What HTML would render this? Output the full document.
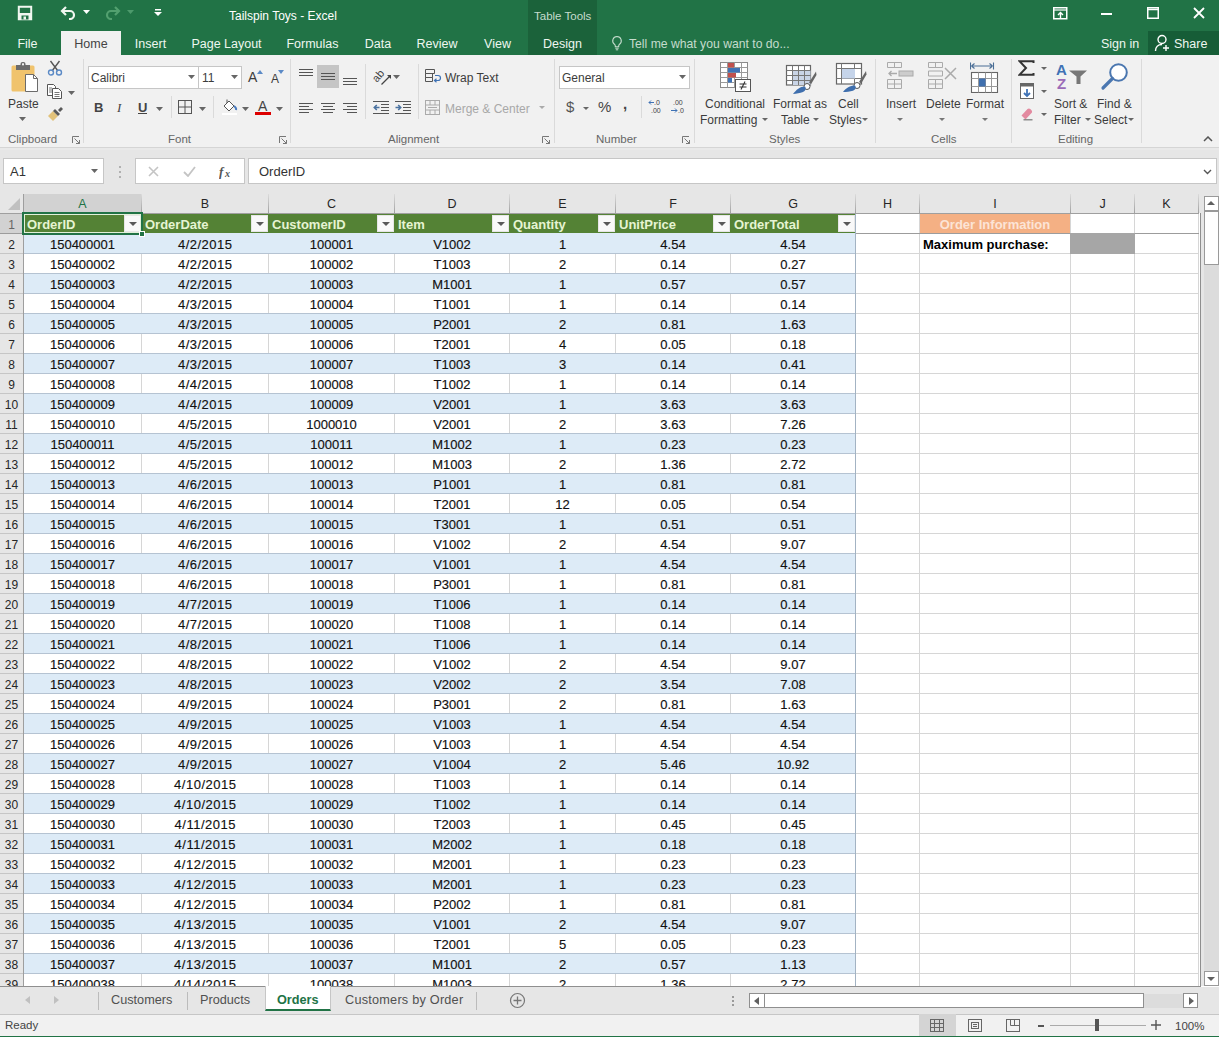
<!DOCTYPE html><html><head><meta charset="utf-8"><style>
*{box-sizing:border-box}
html,body{margin:0;padding:0}
body{width:1219px;height:1037px;overflow:hidden;position:relative;background:#fff;font-family:"Liberation Sans",sans-serif;color:#262626}
.a{position:absolute}
#title{position:absolute;left:0;top:0;width:1219px;height:55px;background:#217346}
.tt{position:absolute;color:#fff;font-size:12.5px;white-space:nowrap}
.tab{position:absolute;top:32px;height:23px;color:#eef7f0;font-size:12.5px;line-height:24px;text-align:center;white-space:nowrap}
#home{left:61px;width:60px;background:#f1f1f1;color:#444;top:31px;height:24px;line-height:26px}
#ctx{position:absolute;left:528px;top:0;width:69px;height:55px;background:#1b623a}
#ribbon{position:absolute;left:0;top:55px;width:1219px;height:92px;background:#f1f1f1}
.sep{position:absolute;top:4px;width:1px;height:84px;background:#dadada}
.gl{position:absolute;top:78px;font-size:11.5px;color:#666;white-space:nowrap}
.rt{position:absolute;font-size:12px;color:#3c3c3c;white-space:nowrap;line-height:16px;text-align:center}
.dis{color:#a8a8a8}
#fbar{position:absolute;left:0;top:147px;width:1219px;height:48px;background:#e6e6e6;border-top:3px solid #e9e9e9}
.box{position:absolute;background:#fff;border:1px solid #c6c6c6}
#grid{position:absolute;left:0;top:0;width:1219px;height:1037px}
.corner{position:absolute;left:0;top:194px;width:23px;height:20px;background:#e6e6e6}
.ch{position:absolute;top:194px;height:20px;background:#e6e6e6;font-size:12.5px;line-height:21px;text-align:center;color:#262626}
.chl{position:absolute;top:194px;width:1px;height:19px;background:linear-gradient(#dcdcdc,#a0a0a0)}
.ch.sel{background:#d2d2d2;color:#217346}
.rh{position:absolute;left:0;width:23px;height:20px;background:#e6e6e6;font-size:12px;line-height:22px;text-align:center;color:#262626}
.rh.sel{background:#d2d2d2;color:#666}
.rhb{position:absolute;left:23px;top:194px;width:1px;height:792px;background:#9e9e9e}
.rhl{position:absolute;left:0;width:23px;height:1px;background:#c6c6c6}
.trow{position:absolute;left:24px;width:831px;height:19px}
.b1{background:#ddebf7}
.hl{position:absolute;left:24px;width:1175px;height:1px;background:#d6d6d6}
.thl{position:absolute;left:24px;width:831px;height:1px;background:#b5c3d2}
.vl{position:absolute;top:214px;width:1px;height:772px;background:#d6d6d6}
.thead{position:absolute;left:24px;width:831px;height:19px;background:#548235}
.th{position:absolute;height:20px;line-height:21px;padding-left:3px;font-weight:bold;font-size:13px;color:#e6f4d2;white-space:nowrap}
.fb{position:absolute;width:17px;height:17px;background:#f9f9f9;border:1px solid #e6e6e6}
.fb i{position:absolute;left:4px;top:6px;width:0;height:0;border-left:4px solid transparent;border-right:4px solid transparent;border-top:4px solid #595959}
.c{position:absolute;height:20px;line-height:22px;text-align:center;font-size:13px;color:#111;white-space:nowrap;-webkit-text-stroke:0.15px #111}
.tbr{position:absolute;left:855px;top:214px;width:1px;height:772px;background:#a3b3c3}
.oi{position:absolute;height:19px;background:#f4b084;color:#fce4d6;font-weight:bold;font-size:13px;line-height:21px;text-align:center}
.mp{position:absolute;height:20px;line-height:22px;padding-left:3px;font-weight:bold;font-size:13px;color:#000;white-space:nowrap}
.j2{position:absolute;height:21px;background:#a6a6a6}
.selbox{position:absolute;left:22px;top:212px;width:121px;height:23px;border:2px solid #217346;box-shadow:inset 0 0 0 1px #e2f0d9}
.selhandle{position:absolute;left:139px;top:231px;width:6px;height:6px;background:#217346;border:1px solid #fff}
#tabs{position:absolute;left:0;top:987px;width:1219px;height:27px;background:#e6e6e6}
#status{position:absolute;left:0;top:1014px;width:1219px;height:22px;background:#f1f1f1;border-top:1px solid #c6c6c6}
#ribbon .rt{margin-top:1px}
.chb{position:absolute;left:0;top:213px;width:1199px;height:1px;background:#9f9f9f}

</style></head><body>
<div id="title">
  <!-- save -->
  <svg class="a" style="left:17px;top:5px" width="16" height="16" viewBox="0 0 16 16"><path d="M1.8 1.8h12.4v12.4H1.8z" fill="none" stroke="#f0f7f0" stroke-width="2"/><path d="M1.5 8h13v6.5h-13z" fill="#f0f7f0"/><rect x="4.5" y="10.5" width="7" height="4" fill="#217346"/><rect x="6.5" y="11.5" width="2.5" height="3" fill="#f0f7f0"/></svg>
  <!-- undo -->
  <svg class="a" style="left:60px;top:5px" width="17" height="15" viewBox="0 0 17 15"><path d="M2.5 6h7.5a4 4 0 0 1 0 8h-1" fill="none" stroke="#f0f7f0" stroke-width="2.2"/><path d="M6 2L2 6l4 4" fill="none" stroke="#f0f7f0" stroke-width="2.2"/></svg>
  <svg class="a" style="left:83px;top:10px" width="7" height="4"><path d="M0 0h7L3.5 4z" fill="#fff"/></svg>
  <!-- redo -->
  <svg class="a" style="left:104px;top:5px" width="17" height="15" viewBox="0 0 17 15"><path d="M14.5 6H7a4 4 0 0 0 0 8h1" fill="none" stroke="#52a06f" stroke-width="2.2"/><path d="M11 2l4 4-4 4" fill="none" stroke="#52a06f" stroke-width="2.2"/></svg>
  <svg class="a" style="left:127px;top:10px" width="7" height="4"><path d="M0 0h7L3.5 4z" fill="#4d9a6c"/></svg>
  <!-- customize -->
  <svg class="a" style="left:154px;top:9px" width="8" height="8"><rect x="1" y="0" width="6" height="1.5" fill="#fff"/><path d="M0 3h8L4 7z" fill="#fff"/></svg>
  <div class="tt" style="left:229px;top:9px;font-size:12px">Tailspin Toys - Excel</div>
  <div id="ctx"></div>
  <div class="tt" style="left:534px;top:10px;font-size:11.5px;color:#c5dccd">Table Tools</div>
  <!-- window buttons -->
  <svg class="a" style="left:1053px;top:7px" width="15" height="13"><rect x="0.75" y="0.75" width="13" height="11" fill="none" stroke="#fff" stroke-width="1.5"/><path d="M1 3h13" stroke="#fff" stroke-width="1.2"/><path d="M7.5 11V5.5M5 8l2.5-2.5L10 8" fill="none" stroke="#fff" stroke-width="1.4"/></svg>
  <div class="a" style="left:1101px;top:13px;width:11px;height:2px;background:#fff"></div>
  <svg class="a" style="left:1147px;top:7px" width="12" height="12"><rect x="0.75" y="0.75" width="10.5" height="10.5" fill="none" stroke="#fff" stroke-width="1.5"/><path d="M1 2.5h10" stroke="#fff" stroke-width="1.5"/></svg>
  <svg class="a" style="left:1193px;top:7px" width="12" height="12"><path d="M1 1l10 10M11 1L1 11" stroke="#fff" stroke-width="1.8"/></svg>
  <!-- tabs -->
  <div class="tab" style="left:10px;width:35px">File</div>
  <div class="tab" id="home">Home</div>
  <div class="tab" style="left:130px;width:41px">Insert</div>
  <div class="tab" style="left:188px;width:77px">Page Layout</div>
  <div class="tab" style="left:282px;width:61px">Formulas</div>
  <div class="tab" style="left:360px;width:36px">Data</div>
  <div class="tab" style="left:412px;width:50px">Review</div>
  <div class="tab" style="left:479px;width:37px">View</div>
  <div class="tab" style="left:528px;width:69px">Design</div>
  <svg class="a" style="left:611px;top:35px" width="12" height="16"><path d="M6 1.5a4.3 4.3 0 0 0-2.6 7.7c.6.5.9 1.1.9 1.8v.8h3.4V11c0-.7.3-1.3.9-1.8A4.3 4.3 0 0 0 6 1.5z" fill="none" stroke="#c5dccd" stroke-width="1.1"/><path d="M4.3 13.2h3.4M4.8 14.8h2.4" stroke="#c5dccd" stroke-width="1"/></svg>
  <div class="tab" style="left:629px;width:auto;color:#c5dccd;font-size:12.2px">Tell me what you want to do...</div>
  <div class="tab" style="left:1101px;width:auto">Sign in</div>
  <div class="a" style="left:1148px;top:31px;width:71px;height:24px;background:#165d37"></div>
  <svg class="a" style="left:1154px;top:34px" width="17" height="18" viewBox="0 0 17 18"><circle cx="8" cy="5.5" r="4" fill="none" stroke="#fff" stroke-width="1.4"/><path d="M1.5 17c0-4 2.5-6.5 6.5-6.5" fill="none" stroke="#fff" stroke-width="1.4"/><path d="M12 11v6M9 14h6" stroke="#fff" stroke-width="1.4"/></svg>
  <div class="tab" style="left:1174px;width:auto">Share</div>
</div>

<div id="ribbon">
  <!-- Clipboard -->
  <svg class="a" style="left:10px;top:6px" width="30" height="32" viewBox="0 0 30 32">
    <rect x="1.5" y="4.5" width="23" height="26" rx="1.5" fill="#f0c36d"/>
    <path d="M6 4h14v5H6z" fill="#6b6b6b"/><rect x="10.5" y="1" width="5" height="5" rx="2" fill="#6b6b6b"/><rect x="12" y="2.3" width="2" height="2" fill="#f1f1f1"/>
    <path d="M15.5 13.5h8l4 4v13h-12z" fill="#fff" stroke="#6b6b6b" stroke-width="1"/><path d="M23.5 13.5v4h4" fill="none" stroke="#6b6b6b" stroke-width="1"/>
  </svg>
  <div class="rt" style="left:8px;top:40px;width:30px">Paste</div>
  <svg class="a" style="left:19px;top:62px" width="7" height="4"><path d="M0 0h7L3.5 4z" fill="#666"/></svg>
  <svg class="a" style="left:47px;top:5px" width="16" height="16" viewBox="0 0 16 16"><path d="M3.5 1l7.5 10M12.5 1L5 11" stroke="#555" stroke-width="1.4"/><circle cx="4" cy="12.5" r="2.5" fill="none" stroke="#5b8ac6" stroke-width="1.4"/><circle cx="12" cy="12.5" r="2.5" fill="none" stroke="#5b8ac6" stroke-width="1.4"/></svg>
  <svg class="a" style="left:46px;top:28px" width="17" height="16" viewBox="0 0 17 16"><path d="M1.5 1.5h6l2 2v9h-8z" fill="#fff" stroke="#555" stroke-width="1"/><path d="M6.5 5.5h6l3 3v7h-9z" fill="#fff" stroke="#555" stroke-width="1"/><path d="M8.5 9.5h5M8.5 11.5h5M8.5 13.5h5M3 5h3M3 7h3M3 9h3" stroke="#555" stroke-width="0.8"/></svg>
  <svg class="a" style="left:68px;top:36px" width="7" height="4"><path d="M0 0h7L3.5 4z" fill="#666"/></svg>
  <svg class="a" style="left:47px;top:52px" width="17" height="15" viewBox="0 0 17 15"><path d="M1 9l5-5 5 5-5 5z" fill="#e2c27a"/><path d="M6 4l5 5 2-2-5-5z" fill="#595959"/><path d="M11 3l3-3 2 2-3 3z" fill="#595959"/></svg>
  <div class="gl" style="left:8px">Clipboard</div>
  <svg class="a" style="left:72px;top:81px" width="8" height="8"><path d="M0.5 7V0.5H7" fill="none" stroke="#777" stroke-width="1"/><path d="M2.5 2.5l5 5M7.5 4v3.5H4" fill="none" stroke="#777" stroke-width="1"/></svg>
  <div class="sep" style="left:83px"></div>

  <!-- Font -->
  <div class="box" style="left:88px;top:11px;width:111px;height:23px"></div>
  <div class="rt" style="left:91px;top:14px;text-align:left">Calibri</div>
  <svg class="a" style="left:188px;top:20px" width="7" height="4"><path d="M0 0h7L3.5 4z" fill="#666"/></svg>
  <div class="box" style="left:198px;top:11px;width:44px;height:23px"></div>
  <div class="rt" style="left:202px;top:14px;text-align:left">11</div>
  <svg class="a" style="left:231px;top:20px" width="7" height="4"><path d="M0 0h7L3.5 4z" fill="#666"/></svg>
  <div class="rt" style="left:248px;top:13px;font-size:14px;text-align:left">A</div>
  <svg class="a" style="left:257px;top:15px" width="6" height="4"><path d="M0 4h6L3 0z" fill="#5b8ac6"/></svg>
  <div class="rt" style="left:271px;top:15px;font-size:12px;text-align:left">A</div>
  <svg class="a" style="left:278px;top:15px" width="6" height="4"><path d="M0 0h6L3 4z" fill="#5b8ac6"/></svg>
  <div class="rt" style="left:94px;top:44px;font-weight:bold;font-size:13px;text-align:left;color:#444">B</div>
  <div class="rt" style="left:117px;top:44px;font-style:italic;font-size:13px;text-align:left;color:#444;font-family:'Liberation Serif',serif">I</div>
  <div class="rt" style="left:138px;top:44px;font-weight:bold;font-size:13px;text-align:left;color:#444">U</div>
  <div class="a" style="left:138px;top:58px;width:9px;height:1px;background:#444"></div>
  <svg class="a" style="left:156px;top:52px" width="7" height="4"><path d="M0 0h7L3.5 4z" fill="#666"/></svg>
  <div class="a" style="left:171px;top:41px;width:1px;height:22px;background:#dadada"></div>
  <svg class="a" style="left:178px;top:45px" width="15" height="14"><rect x="0.5" y="0.5" width="13" height="13" fill="none" stroke="#555"/><path d="M7 0.5v13M0.5 7h13" stroke="#555"/></svg>
  <svg class="a" style="left:199px;top:52px" width="7" height="4"><path d="M0 0h7L3.5 4z" fill="#666"/></svg>
  <div class="a" style="left:213px;top:41px;width:1px;height:22px;background:#dadada"></div>
  <svg class="a" style="left:222px;top:43px" width="16" height="17" viewBox="0 0 16 17"><path d="M2 8l5-5 5 5-5 5z" fill="#fff" stroke="#555" stroke-width="1"/><path d="M5 5V1.5" stroke="#555"/><path d="M12 8c1.5 1 2.5 2.5 2 4" fill="none" stroke="#4a7cc0" stroke-width="2"/><rect x="0" y="15" width="15" height="2" fill="#fff"/></svg>
  <svg class="a" style="left:242px;top:52px" width="7" height="4"><path d="M0 0h7L3.5 4z" fill="#666"/></svg>
  <div class="rt" style="left:258px;top:42px;font-size:14px;text-align:left;color:#444">A</div>
  <div class="a" style="left:255px;top:57px;width:16px;height:3px;background:#d00"></div>
  <svg class="a" style="left:276px;top:52px" width="7" height="4"><path d="M0 0h7L3.5 4z" fill="#666"/></svg>
  <div class="gl" style="left:168px">Font</div>
  <svg class="a" style="left:279px;top:81px" width="8" height="8"><path d="M0.5 7V0.5H7" fill="none" stroke="#777" stroke-width="1"/><path d="M2.5 2.5l5 5M7.5 4v3.5H4" fill="none" stroke="#777" stroke-width="1"/></svg>
  <div class="sep" style="left:290px"></div>

  <!-- Alignment -->
  <svg class="a" style="left:299px;top:13px" width="15" height="8"><path d="M0 1.5h14M0 4.5h14M0 7.5h14" stroke="#555" stroke-width="1"/></svg>
  <div class="a" style="left:317px;top:10px;width:22px;height:23px;background:#c5c5c5"></div>
  <svg class="a" style="left:321px;top:17px" width="15" height="8"><path d="M0 1.5h14M0 4.5h14M0 7.5h14" stroke="#555" stroke-width="1"/></svg>
  <svg class="a" style="left:343px;top:22px" width="15" height="8"><path d="M0 1.5h14M0 4.5h14M0 7.5h14" stroke="#555" stroke-width="1"/></svg>
  <svg class="a" style="left:373px;top:12px" width="26" height="20" viewBox="0 0 26 20"><text x="0" y="0" font-family="Liberation Sans" font-size="11" fill="#444" transform="translate(4 16) rotate(-50)">ab</text><path d="M8.5 17.5L17 9" stroke="#444" stroke-width="1.2"/><path d="M14 8h4v4z" fill="#444"/></svg>
  <svg class="a" style="left:393px;top:20px" width="7" height="4"><path d="M0 0h7L3.5 4z" fill="#666"/></svg>
  <div class="a" style="left:365px;top:9px;width:1px;height:55px;background:#dadada"></div>
  <svg class="a" style="left:299px;top:48px" width="15" height="14"><path d="M0 .5h14M0 3.5h10M0 6.5h14M0 9.5h10" stroke="#555" stroke-width="1"/></svg>
  <svg class="a" style="left:321px;top:48px" width="15" height="14"><path d="M0 .5h14M2 3.5h10M0 6.5h14M2 9.5h10" stroke="#555" stroke-width="1"/></svg>
  <svg class="a" style="left:343px;top:48px" width="15" height="14"><path d="M0 .5h14M4 3.5h10M0 6.5h14M4 9.5h10" stroke="#555" stroke-width="1"/></svg>
  <svg class="a" style="left:373px;top:46px" width="17" height="15"><path d="M0 .5h16M8 3.5h8M8 6.5h8M8 9.5h8M0 12.5h16" stroke="#555" stroke-width="1"/><path d="M1.5 6.5h5M3.8 4L1.3 6.5 3.8 9" fill="none" stroke="#4a72a0" stroke-width="1.6"/></svg>
  <svg class="a" style="left:395px;top:46px" width="17" height="15"><path d="M0 .5h16M8 3.5h8M8 6.5h8M8 9.5h8M0 12.5h16" stroke="#555" stroke-width="1"/><path d="M0.5 6.5h5M3.2 4l2.5 2.5L3.2 9" fill="none" stroke="#4a72a0" stroke-width="1.6"/></svg>
  <div class="a" style="left:418px;top:9px;width:1px;height:55px;background:#dadada"></div>
  <svg class="a" style="left:425px;top:14px" width="17" height="16" viewBox="0 0 17 16"><path d="M0.5 0.5h9v4h-9zM0.5 4.5h7v4h-7zM0.5 8.5h7v4h-7z" fill="none" stroke="#555"/><path d="M10 6.5h3a2.5 2.5 0 0 1 0 5h-3M11.5 9.8L9.5 11.5l2 1.7" fill="none" stroke="#3f72b5" stroke-width="1.2"/></svg>
  <div class="rt" style="left:445px;top:14px;text-align:left">Wrap Text</div>
  <svg class="a" style="left:425px;top:45px" width="16" height="16"><rect x="0.5" y="0.5" width="14" height="14" fill="none" stroke="#aaa"/><path d="M0.5 5h14M0.5 10h14M5 0.5v4.5M10 0.5v4.5M5 10v4.5M10 10v4.5M3 7.5h9" stroke="#aaa"/></svg>
  <div class="rt dis" style="left:445px;top:45px;text-align:left">Merge &amp; Center</div>
  <svg class="a" style="left:539px;top:51px" width="6" height="3"><path d="M0 0h6L3 3z" fill="#aaa"/></svg>
  <div class="gl" style="left:388px">Alignment</div>
  <svg class="a" style="left:542px;top:81px" width="8" height="8"><path d="M0.5 7V0.5H7" fill="none" stroke="#777" stroke-width="1"/><path d="M2.5 2.5l5 5M7.5 4v3.5H4" fill="none" stroke="#777" stroke-width="1"/></svg>
  <div class="sep" style="left:554px"></div>

  <!-- Number -->
  <div class="box" style="left:559px;top:11px;width:131px;height:23px"></div>
  <div class="rt" style="left:562px;top:14px;text-align:left">General</div>
  <svg class="a" style="left:679px;top:20px" width="7" height="4"><path d="M0 0h7L3.5 4z" fill="#666"/></svg>
  <div class="rt" style="left:566px;top:43px;font-size:15px;text-align:left;color:#555">$</div>
  <svg class="a" style="left:583px;top:52px" width="6" height="3"><path d="M0 0h6L3 3z" fill="#666"/></svg>
  <div class="rt" style="left:598px;top:43px;font-size:15px;text-align:left;color:#444">%</div>
  <div class="rt" style="left:623px;top:40px;font-size:15px;text-align:left;color:#444;font-weight:bold">,</div>
  <div class="a" style="left:641px;top:41px;width:1px;height:22px;background:#dadada"></div>
  <svg class="a" style="left:648px;top:44px" width="16" height="15" viewBox="0 0 16 15"><text x="6" y="6" font-family="Liberation Sans" font-size="7" fill="#444">.0</text><text x="3" y="14" font-family="Liberation Sans" font-size="7" fill="#444">.00</text><path d="M1 3.5h5M3 1.5l-2 2 2 2" fill="none" stroke="#3f72b5" stroke-width="1"/></svg>
  <svg class="a" style="left:670px;top:44px" width="16" height="15" viewBox="0 0 16 15"><text x="3" y="6" font-family="Liberation Sans" font-size="7" fill="#444">.00</text><text x="8" y="14" font-family="Liberation Sans" font-size="7" fill="#444">.0</text><path d="M1 11.5h6M5 9.5l2 2-2 2" fill="none" stroke="#3f72b5" stroke-width="1"/></svg>
  <div class="gl" style="left:596px">Number</div>
  <svg class="a" style="left:682px;top:81px" width="8" height="8"><path d="M0.5 7V0.5H7" fill="none" stroke="#777" stroke-width="1"/><path d="M2.5 2.5l5 5M7.5 4v3.5H4" fill="none" stroke="#777" stroke-width="1"/></svg>
  <div class="sep" style="left:694px"></div>

  <!-- Styles -->
  <svg class="a" style="left:720px;top:7px" width="32" height="31" viewBox="0 0 32 31">
    <g fill="#fff" stroke="#8a8a8a" stroke-width="1"><rect x="0.5" y="0.5" width="27" height="25"/></g>
    <path d="M0.5 5.5h27M0.5 10.5h27M0.5 15.5h27M0.5 20.5h27M7.5 0.5v25M14.5 0.5v25M21.5 0.5v25" stroke="#9a9a9a"/>
    <rect x="8" y="1" width="6" height="4.5" fill="#c0504d"/><rect x="8" y="6" width="12" height="4.5" fill="#3f72b5"/><rect x="8" y="11" width="8" height="4.5" fill="#c0504d"/><rect x="8" y="16" width="4" height="4.5" fill="#3f72b5"/>
    <rect x="15.5" y="17.5" width="15" height="12" fill="#fff" stroke="#555"/><path d="M19.5 22h7M19.5 25h7M25 19.5l-4 8" stroke="#333" stroke-width="1.1"/>
  </svg>
  <div class="rt" style="left:703px;top:40px;width:64px">Conditional</div>
  <div class="rt" style="left:700px;top:56px;width:68px;text-align:left">Formatting</div>
  <svg class="a" style="left:762px;top:63px" width="6" height="3"><path d="M0 0h6L3 3z" fill="#666"/></svg>
  <svg class="a" style="left:785px;top:9px" width="34" height="30" viewBox="0 0 34 30">
    <rect x="1.5" y="1.5" width="24" height="19.5" fill="#fff" stroke="#666" stroke-width="1.2"/>
    <rect x="7.5" y="6.5" width="18" height="14.5" fill="#c9d4e6"/>
    <path d="M1.5 6.5h24M1.5 11.5h24M1.5 16.5h24M7.5 1.5v19.5M13.5 1.5v19.5M19.5 1.5v19.5" stroke="#777" stroke-width="1"/>
    <path d="M31 7.5l-7 11 2.2 1.6 5.3-9z" fill="#666"/>
    <circle cx="22" cy="22.5" r="3" fill="#fff" stroke="#555" stroke-width="1"/>
    <path d="M8 30c3-4 7-7.5 12-7.5 1.5 2 0.5 4.5-2 5.5-3 1.2-6.5 1.8-10 2z" fill="#3f6fae"/>
  </svg>
  <div class="rt" style="left:772px;top:40px;width:56px">Format as</div>
  <div class="rt" style="left:781px;top:56px;text-align:left">Table</div>
  <svg class="a" style="left:813px;top:63px" width="6" height="3"><path d="M0 0h6L3 3z" fill="#666"/></svg>
  <svg class="a" style="left:835px;top:7px" width="34" height="30" viewBox="0 0 34 30">
    <rect x="1.5" y="1.5" width="25" height="20.5" fill="#fff" stroke="#666" stroke-width="1.2"/>
    <path d="M1.5 6.5h25M1.5 16.5h25M6.5 1.5v20.5M19.5 1.5v20.5" stroke="#777" stroke-width="1"/>
    <rect x="7" y="7" width="13" height="9.5" fill="#c5d4ea"/>
    <path d="M31 9l-7 11 2.2 1.6 5.3-9z" fill="#666"/>
    <circle cx="22" cy="23.5" r="3" fill="#fff" stroke="#555" stroke-width="1"/>
    <path d="M8 30c3-4 7-6.5 12-6.5 1.5 2 0.5 4.5-2 5.2-3 1-6.5 1.2-10 1.3z" fill="#3f6fae"/>
  </svg>
  <div class="rt" style="left:838px;top:40px;text-align:left">Cell</div>
  <div class="rt" style="left:829px;top:56px;text-align:left">Styles</div>
  <svg class="a" style="left:862px;top:63px" width="6" height="3"><path d="M0 0h6L3 3z" fill="#666"/></svg>
  <div class="gl" style="left:769px">Styles</div>
  <div class="sep" style="left:875px"></div>

  <!-- Cells -->
  <svg class="a" style="left:887px;top:7px" width="28" height="28" viewBox="0 0 28 28"><g fill="none" stroke="#aaa"><path d="M0.5 0.5h14v5h-14zM7.5 0.5v5M0.5 17.5h14v9h-14zM0.5 22h14M7.5 17.5v9"/></g><rect x="12" y="9" width="14" height="5" fill="#ccc" stroke="#aaa"/><path d="M2 11.5h8M4.5 9L2 11.5 4.5 14" fill="none" stroke="#aaa" stroke-width="1.3"/></svg>
  <div class="rt" style="left:886px;top:40px;text-align:left">Insert</div>
  <svg class="a" style="left:897px;top:63px" width="6" height="3"><path d="M0 0h6L3 3z" fill="#777"/></svg>
  <svg class="a" style="left:928px;top:7px" width="30" height="28" viewBox="0 0 30 28"><g fill="none" stroke="#aaa"><path d="M0.5 0.5h14v5h-14zM7.5 0.5v5M0.5 17.5h14v9h-14zM0.5 22h14M7.5 17.5v9M0.5 9h14v5h-14z"/></g><path d="M17 6l11 11M28 6L17 17" stroke="#aaa" stroke-width="1.5"/></svg>
  <div class="rt" style="left:926px;top:40px;text-align:left">Delete</div>
  <svg class="a" style="left:939px;top:63px" width="6" height="3"><path d="M0 0h6L3 3z" fill="#777"/></svg>
  <svg class="a" style="left:970px;top:6px" width="30" height="32" viewBox="0 0 30 32"><path d="M1.5 5h21M1.5 5l3-2.5M1.5 5l3 2.5M22.5 5l-3-2.5M22.5 5l-3 2.5M0.5 1.5v7M23.5 1.5v7" fill="none" stroke="#4a6e96" stroke-width="1.1"/><rect x="1.5" y="11.5" width="26" height="20" fill="#fff" stroke="#666" stroke-width="1.1"/><path d="M1.5 17.5h26M1.5 25.5h26M8.5 11.5v20M15.5 11.5v20M21.5 11.5v20" stroke="#999"/><rect x="9" y="17.5" width="6.5" height="8" fill="#3f6fae"/></svg>
  <div class="rt" style="left:966px;top:40px;text-align:left">Format</div>
  <svg class="a" style="left:982px;top:63px" width="6" height="3"><path d="M0 0h6L3 3z" fill="#777"/></svg>
  <div class="gl" style="left:931px">Cells</div>
  <div class="sep" style="left:1011px"></div>

  <!-- Editing -->
  <svg class="a" style="left:1018px;top:5px" width="17" height="16" viewBox="0 0 17 16"><path d="M15.5 3V1.2H1.5L8 8l-6.5 6.8h14V13" fill="none" stroke="#333" stroke-width="2" stroke-linejoin="miter"/></svg>
  <svg class="a" style="left:1041px;top:12px" width="6" height="3"><path d="M0 0h6L3 3z" fill="#666"/></svg>
  <svg class="a" style="left:1020px;top:28px" width="14" height="16"><rect x="0.5" y="0.5" width="13" height="15" fill="#fff" stroke="#666"/><rect x="0.5" y="0.5" width="13" height="3" fill="#666"/><path d="M7 6v7M4 10l3 3 3-3" fill="none" stroke="#3f72b5" stroke-width="1.8"/></svg>
  <svg class="a" style="left:1041px;top:35px" width="6" height="3"><path d="M0 0h6L3 3z" fill="#666"/></svg>
  <svg class="a" style="left:1019px;top:51px" width="16" height="15" viewBox="0 0 16 15"><path d="M2.5 9.5l6-6.5c.8-.8 2-.8 2.8 0l1.2 1.2c.8.8.8 2 0 2.8l-6 6.5z" fill="#e38aa0"/><path d="M4.5 13.8h9" stroke="#777" stroke-width="1.2"/></svg>
  <svg class="a" style="left:1041px;top:58px" width="6" height="3"><path d="M0 0h6L3 3z" fill="#666"/></svg>
  <svg class="a" style="left:1056px;top:8px" width="32" height="27" viewBox="0 0 32 27"><text x="0" y="12" font-family="Liberation Sans" font-weight="bold" font-size="15" fill="#3f72b5">A</text><text x="1" y="26" font-family="Liberation Sans" font-weight="bold" font-size="15" fill="#9b6bb8">Z</text><path d="M13 7.5h18l-6.5 6v7.5h-4v-7.5z" fill="#777"/></svg>
<div class="rt" style="left:1054px;top:40px;text-align:left">Sort &amp;</div>
  <div class="rt" style="left:1054px;top:56px;text-align:left">Filter</div>
  <svg class="a" style="left:1085px;top:63px" width="6" height="3"><path d="M0 0h6L3 3z" fill="#666"/></svg>
  <svg class="a" style="left:1099px;top:7px" width="30" height="30"><circle cx="19.5" cy="10.5" r="8.3" fill="#fff" stroke="#4b77b0" stroke-width="2"/><path d="M13.5 16.5L4 26" stroke="#4b77b0" stroke-width="3.2" stroke-linecap="round"/></svg>
  <div class="rt" style="left:1097px;top:40px;text-align:left">Find &amp;</div>
  <div class="rt" style="left:1094px;top:56px;text-align:left">Select</div>
  <svg class="a" style="left:1128px;top:63px" width="6" height="3"><path d="M0 0h6L3 3z" fill="#666"/></svg>
  <div class="gl" style="left:1058px">Editing</div>
  <div class="sep" style="left:1141px"></div>
  <svg class="a" style="left:1203px;top:81px" width="10" height="6"><path d="M1 5l4-4 4 4" fill="none" stroke="#555" stroke-width="1.5"/></svg>
</div>

<div id="fbar">
  <div class="a" style="left:0;top:-3px;width:1219px;height:1px;background:#d5d5d5"></div>
  <div class="box" style="left:3px;top:8px;width:101px;height:26px;border-color:#c6c6c6"></div>
  <div class="rt" style="left:10px;top:14px;text-align:left;font-size:13px;color:#333">A1</div>
  <svg class="a" style="left:91px;top:19px" width="7" height="4"><path d="M0 0h7L3.5 4z" fill="#666"/></svg>
  <div class="a" style="left:119px;top:16px;width:2px;height:2px;background:#b0b0b0"></div>
  <div class="a" style="left:119px;top:21px;width:2px;height:2px;background:#b0b0b0"></div>
  <div class="a" style="left:119px;top:26px;width:2px;height:2px;background:#b0b0b0"></div>
  <div class="box" style="left:135px;top:8px;width:110px;height:26px"></div>
  <svg class="a" style="left:148px;top:16px" width="11" height="11"><path d="M1 1l9 9M10 1L1 10" stroke="#c4c4c4" stroke-width="1.6"/></svg>
  <svg class="a" style="left:183px;top:16px" width="13" height="11"><path d="M1 6l4 4 7-9" fill="none" stroke="#c4c4c4" stroke-width="1.8"/></svg>
  <svg class="a" style="left:219px;top:15px" width="15" height="14" viewBox="0 0 15 14"><text x="0" y="11" font-family="Liberation Serif" font-style="italic" font-weight="bold" font-size="13" fill="#555">f</text><text x="6" y="12" font-family="Liberation Serif" font-style="italic" font-weight="bold" font-size="10" fill="#555">x</text></svg>
  <div class="box" style="left:248px;top:8px;width:969px;height:26px"></div>
  <div class="rt" style="left:259px;top:14px;text-align:left;font-size:13px;color:#333">OrderID</div>
  <svg class="a" style="left:1203px;top:19px" width="9" height="6"><path d="M1 1l3.5 3.5L8 1" fill="none" stroke="#555" stroke-width="1.4"/></svg>
</div>

<div id="grid">
<div class="corner"></div><svg class="a" style="left:8px;top:198px" width="12" height="12"><path d="M12 0v12H0z" fill="#c0c0c0"/></svg>
<div class="ch sel" style="left:24px;width:117px">A</div>
<div class="chl" style="left:141px"></div>
<div class="ch" style="left:142px;width:126px">B</div>
<div class="chl" style="left:268px"></div>
<div class="ch" style="left:269px;width:125px">C</div>
<div class="chl" style="left:394px"></div>
<div class="ch" style="left:395px;width:114px">D</div>
<div class="chl" style="left:509px"></div>
<div class="ch" style="left:510px;width:105px">E</div>
<div class="chl" style="left:615px"></div>
<div class="ch" style="left:616px;width:114px">F</div>
<div class="chl" style="left:730px"></div>
<div class="ch" style="left:731px;width:124px">G</div>
<div class="chl" style="left:855px"></div>
<div class="ch" style="left:856px;width:63px">H</div>
<div class="chl" style="left:919px"></div>
<div class="ch" style="left:920px;width:150px">I</div>
<div class="chl" style="left:1070px"></div>
<div class="ch" style="left:1071px;width:63px">J</div>
<div class="chl" style="left:1134px"></div>
<div class="ch" style="left:1135px;width:63px">K</div>
<div class="chl" style="left:1198px"></div>
<div class="rh sel" style="top:214px">1</div>
<div class="rh" style="top:234px">2</div>
<div class="rh" style="top:254px">3</div>
<div class="rh" style="top:274px">4</div>
<div class="rh" style="top:294px">5</div>
<div class="rh" style="top:314px">6</div>
<div class="rh" style="top:334px">7</div>
<div class="rh" style="top:354px">8</div>
<div class="rh" style="top:374px">9</div>
<div class="rh" style="top:394px">10</div>
<div class="rh" style="top:414px">11</div>
<div class="rh" style="top:434px">12</div>
<div class="rh" style="top:454px">13</div>
<div class="rh" style="top:474px">14</div>
<div class="rh" style="top:494px">15</div>
<div class="rh" style="top:514px">16</div>
<div class="rh" style="top:534px">17</div>
<div class="rh" style="top:554px">18</div>
<div class="rh" style="top:574px">19</div>
<div class="rh" style="top:594px">20</div>
<div class="rh" style="top:614px">21</div>
<div class="rh" style="top:634px">22</div>
<div class="rh" style="top:654px">23</div>
<div class="rh" style="top:674px">24</div>
<div class="rh" style="top:694px">25</div>
<div class="rh" style="top:714px">26</div>
<div class="rh" style="top:734px">27</div>
<div class="rh" style="top:754px">28</div>
<div class="rh" style="top:774px">29</div>
<div class="rh" style="top:794px">30</div>
<div class="rh" style="top:814px">31</div>
<div class="rh" style="top:834px">32</div>
<div class="rh" style="top:854px">33</div>
<div class="rh" style="top:874px">34</div>
<div class="rh" style="top:894px">35</div>
<div class="rh" style="top:914px">36</div>
<div class="rh" style="top:934px">37</div>
<div class="rh" style="top:954px">38</div>
<div class="rh" style="top:974px">39</div>
<div class="rhb"></div>
<div class="hl" style="top:233px"></div>
<div class="rhl" style="top:233px"></div>
<div class="hl" style="top:253px"></div>
<div class="rhl" style="top:253px"></div>
<div class="hl" style="top:273px"></div>
<div class="rhl" style="top:273px"></div>
<div class="hl" style="top:293px"></div>
<div class="rhl" style="top:293px"></div>
<div class="hl" style="top:313px"></div>
<div class="rhl" style="top:313px"></div>
<div class="hl" style="top:333px"></div>
<div class="rhl" style="top:333px"></div>
<div class="hl" style="top:353px"></div>
<div class="rhl" style="top:353px"></div>
<div class="hl" style="top:373px"></div>
<div class="rhl" style="top:373px"></div>
<div class="hl" style="top:393px"></div>
<div class="rhl" style="top:393px"></div>
<div class="hl" style="top:413px"></div>
<div class="rhl" style="top:413px"></div>
<div class="hl" style="top:433px"></div>
<div class="rhl" style="top:433px"></div>
<div class="hl" style="top:453px"></div>
<div class="rhl" style="top:453px"></div>
<div class="hl" style="top:473px"></div>
<div class="rhl" style="top:473px"></div>
<div class="hl" style="top:493px"></div>
<div class="rhl" style="top:493px"></div>
<div class="hl" style="top:513px"></div>
<div class="rhl" style="top:513px"></div>
<div class="hl" style="top:533px"></div>
<div class="rhl" style="top:533px"></div>
<div class="hl" style="top:553px"></div>
<div class="rhl" style="top:553px"></div>
<div class="hl" style="top:573px"></div>
<div class="rhl" style="top:573px"></div>
<div class="hl" style="top:593px"></div>
<div class="rhl" style="top:593px"></div>
<div class="hl" style="top:613px"></div>
<div class="rhl" style="top:613px"></div>
<div class="hl" style="top:633px"></div>
<div class="rhl" style="top:633px"></div>
<div class="hl" style="top:653px"></div>
<div class="rhl" style="top:653px"></div>
<div class="hl" style="top:673px"></div>
<div class="rhl" style="top:673px"></div>
<div class="hl" style="top:693px"></div>
<div class="rhl" style="top:693px"></div>
<div class="hl" style="top:713px"></div>
<div class="rhl" style="top:713px"></div>
<div class="hl" style="top:733px"></div>
<div class="rhl" style="top:733px"></div>
<div class="hl" style="top:753px"></div>
<div class="rhl" style="top:753px"></div>
<div class="hl" style="top:773px"></div>
<div class="rhl" style="top:773px"></div>
<div class="hl" style="top:793px"></div>
<div class="rhl" style="top:793px"></div>
<div class="hl" style="top:813px"></div>
<div class="rhl" style="top:813px"></div>
<div class="hl" style="top:833px"></div>
<div class="rhl" style="top:833px"></div>
<div class="hl" style="top:853px"></div>
<div class="rhl" style="top:853px"></div>
<div class="hl" style="top:873px"></div>
<div class="rhl" style="top:873px"></div>
<div class="hl" style="top:893px"></div>
<div class="rhl" style="top:893px"></div>
<div class="hl" style="top:913px"></div>
<div class="rhl" style="top:913px"></div>
<div class="hl" style="top:933px"></div>
<div class="rhl" style="top:933px"></div>
<div class="hl" style="top:953px"></div>
<div class="rhl" style="top:953px"></div>
<div class="hl" style="top:973px"></div>
<div class="rhl" style="top:973px"></div>
<div class="hl" style="top:993px"></div>
<div class="rhl" style="top:993px"></div>
<div class="vl" style="left:141px"></div>
<div class="vl" style="left:268px"></div>
<div class="vl" style="left:394px"></div>
<div class="vl" style="left:509px"></div>
<div class="vl" style="left:615px"></div>
<div class="vl" style="left:730px"></div>
<div class="vl" style="left:855px"></div>
<div class="vl" style="left:919px"></div>
<div class="vl" style="left:1070px"></div>
<div class="vl" style="left:1134px"></div>
<div class="vl" style="left:1198px"></div>
<div class="trow b1" style="top:234px"></div>
<div class="thl" style="top:253px"></div>
<div class="thl" style="top:273px"></div>
<div class="trow b1" style="top:274px"></div>
<div class="thl" style="top:293px"></div>
<div class="thl" style="top:313px"></div>
<div class="trow b1" style="top:314px"></div>
<div class="thl" style="top:333px"></div>
<div class="thl" style="top:353px"></div>
<div class="trow b1" style="top:354px"></div>
<div class="thl" style="top:373px"></div>
<div class="thl" style="top:393px"></div>
<div class="trow b1" style="top:394px"></div>
<div class="thl" style="top:413px"></div>
<div class="thl" style="top:433px"></div>
<div class="trow b1" style="top:434px"></div>
<div class="thl" style="top:453px"></div>
<div class="thl" style="top:473px"></div>
<div class="trow b1" style="top:474px"></div>
<div class="thl" style="top:493px"></div>
<div class="thl" style="top:513px"></div>
<div class="trow b1" style="top:514px"></div>
<div class="thl" style="top:533px"></div>
<div class="thl" style="top:553px"></div>
<div class="trow b1" style="top:554px"></div>
<div class="thl" style="top:573px"></div>
<div class="thl" style="top:593px"></div>
<div class="trow b1" style="top:594px"></div>
<div class="thl" style="top:613px"></div>
<div class="thl" style="top:633px"></div>
<div class="trow b1" style="top:634px"></div>
<div class="thl" style="top:653px"></div>
<div class="thl" style="top:673px"></div>
<div class="trow b1" style="top:674px"></div>
<div class="thl" style="top:693px"></div>
<div class="thl" style="top:713px"></div>
<div class="trow b1" style="top:714px"></div>
<div class="thl" style="top:733px"></div>
<div class="thl" style="top:753px"></div>
<div class="trow b1" style="top:754px"></div>
<div class="thl" style="top:773px"></div>
<div class="thl" style="top:793px"></div>
<div class="trow b1" style="top:794px"></div>
<div class="thl" style="top:813px"></div>
<div class="thl" style="top:833px"></div>
<div class="trow b1" style="top:834px"></div>
<div class="thl" style="top:853px"></div>
<div class="thl" style="top:873px"></div>
<div class="trow b1" style="top:874px"></div>
<div class="thl" style="top:893px"></div>
<div class="thl" style="top:913px"></div>
<div class="trow b1" style="top:914px"></div>
<div class="thl" style="top:933px"></div>
<div class="thl" style="top:953px"></div>
<div class="trow b1" style="top:954px"></div>
<div class="thl" style="top:973px"></div>
<div class="thl" style="top:993px"></div>
<div class="tbr"></div>
<div class="chb"></div><div class="thl" style="top:233px;background:#ddebf7"></div><div class="thl" style="top:232px;background:#566e4c"></div><div class="a" style="left:856px;top:233px;width:343px;height:1px;background:#9c9c9c"></div><div class="a" style="left:0;top:233px;width:23px;height:1px;background:#9c9c9c"></div>
<div class="thead" style="top:214px"></div>
<div class="th" style="left:24px;top:214px;width:117px">OrderID</div>
<div class="fb" style="left:124px;top:215px"><i></i></div>
<div class="th" style="left:142px;top:214px;width:126px">OrderDate</div>
<div class="fb" style="left:251px;top:215px"><i></i></div>
<div class="th" style="left:269px;top:214px;width:125px">CustomerID</div>
<div class="fb" style="left:377px;top:215px"><i></i></div>
<div class="th" style="left:395px;top:214px;width:114px">Item</div>
<div class="fb" style="left:492px;top:215px"><i></i></div>
<div class="th" style="left:510px;top:214px;width:105px">Quantity</div>
<div class="fb" style="left:598px;top:215px"><i></i></div>
<div class="th" style="left:616px;top:214px;width:114px">UnitPrice</div>
<div class="fb" style="left:713px;top:215px"><i></i></div>
<div class="th" style="left:731px;top:214px;width:124px">OrderTotal</div>
<div class="fb" style="left:838px;top:215px"><i></i></div>
<div class="c" style="left:24px;top:234px;width:117px">150400001</div>
<div class="c" style="left:142px;top:234px;width:126px;letter-spacing:0.5px;text-indent:0.5px">4/2/2015</div>
<div class="c" style="left:269px;top:234px;width:125px">100001</div>
<div class="c" style="left:395px;top:234px;width:114px">V1002</div>
<div class="c" style="left:510px;top:234px;width:105px">1</div>
<div class="c" style="left:616px;top:234px;width:114px">4.54</div>
<div class="c" style="left:731px;top:234px;width:124px">4.54</div>
<div class="c" style="left:24px;top:254px;width:117px">150400002</div>
<div class="c" style="left:142px;top:254px;width:126px;letter-spacing:0.5px;text-indent:0.5px">4/2/2015</div>
<div class="c" style="left:269px;top:254px;width:125px">100002</div>
<div class="c" style="left:395px;top:254px;width:114px">T1003</div>
<div class="c" style="left:510px;top:254px;width:105px">2</div>
<div class="c" style="left:616px;top:254px;width:114px">0.14</div>
<div class="c" style="left:731px;top:254px;width:124px">0.27</div>
<div class="c" style="left:24px;top:274px;width:117px">150400003</div>
<div class="c" style="left:142px;top:274px;width:126px;letter-spacing:0.5px;text-indent:0.5px">4/2/2015</div>
<div class="c" style="left:269px;top:274px;width:125px">100003</div>
<div class="c" style="left:395px;top:274px;width:114px">M1001</div>
<div class="c" style="left:510px;top:274px;width:105px">1</div>
<div class="c" style="left:616px;top:274px;width:114px">0.57</div>
<div class="c" style="left:731px;top:274px;width:124px">0.57</div>
<div class="c" style="left:24px;top:294px;width:117px">150400004</div>
<div class="c" style="left:142px;top:294px;width:126px;letter-spacing:0.5px;text-indent:0.5px">4/3/2015</div>
<div class="c" style="left:269px;top:294px;width:125px">100004</div>
<div class="c" style="left:395px;top:294px;width:114px">T1001</div>
<div class="c" style="left:510px;top:294px;width:105px">1</div>
<div class="c" style="left:616px;top:294px;width:114px">0.14</div>
<div class="c" style="left:731px;top:294px;width:124px">0.14</div>
<div class="c" style="left:24px;top:314px;width:117px">150400005</div>
<div class="c" style="left:142px;top:314px;width:126px;letter-spacing:0.5px;text-indent:0.5px">4/3/2015</div>
<div class="c" style="left:269px;top:314px;width:125px">100005</div>
<div class="c" style="left:395px;top:314px;width:114px">P2001</div>
<div class="c" style="left:510px;top:314px;width:105px">2</div>
<div class="c" style="left:616px;top:314px;width:114px">0.81</div>
<div class="c" style="left:731px;top:314px;width:124px">1.63</div>
<div class="c" style="left:24px;top:334px;width:117px">150400006</div>
<div class="c" style="left:142px;top:334px;width:126px;letter-spacing:0.5px;text-indent:0.5px">4/3/2015</div>
<div class="c" style="left:269px;top:334px;width:125px">100006</div>
<div class="c" style="left:395px;top:334px;width:114px">T2001</div>
<div class="c" style="left:510px;top:334px;width:105px">4</div>
<div class="c" style="left:616px;top:334px;width:114px">0.05</div>
<div class="c" style="left:731px;top:334px;width:124px">0.18</div>
<div class="c" style="left:24px;top:354px;width:117px">150400007</div>
<div class="c" style="left:142px;top:354px;width:126px;letter-spacing:0.5px;text-indent:0.5px">4/3/2015</div>
<div class="c" style="left:269px;top:354px;width:125px">100007</div>
<div class="c" style="left:395px;top:354px;width:114px">T1003</div>
<div class="c" style="left:510px;top:354px;width:105px">3</div>
<div class="c" style="left:616px;top:354px;width:114px">0.14</div>
<div class="c" style="left:731px;top:354px;width:124px">0.41</div>
<div class="c" style="left:24px;top:374px;width:117px">150400008</div>
<div class="c" style="left:142px;top:374px;width:126px;letter-spacing:0.5px;text-indent:0.5px">4/4/2015</div>
<div class="c" style="left:269px;top:374px;width:125px">100008</div>
<div class="c" style="left:395px;top:374px;width:114px">T1002</div>
<div class="c" style="left:510px;top:374px;width:105px">1</div>
<div class="c" style="left:616px;top:374px;width:114px">0.14</div>
<div class="c" style="left:731px;top:374px;width:124px">0.14</div>
<div class="c" style="left:24px;top:394px;width:117px">150400009</div>
<div class="c" style="left:142px;top:394px;width:126px;letter-spacing:0.5px;text-indent:0.5px">4/4/2015</div>
<div class="c" style="left:269px;top:394px;width:125px">100009</div>
<div class="c" style="left:395px;top:394px;width:114px">V2001</div>
<div class="c" style="left:510px;top:394px;width:105px">1</div>
<div class="c" style="left:616px;top:394px;width:114px">3.63</div>
<div class="c" style="left:731px;top:394px;width:124px">3.63</div>
<div class="c" style="left:24px;top:414px;width:117px">150400010</div>
<div class="c" style="left:142px;top:414px;width:126px;letter-spacing:0.5px;text-indent:0.5px">4/5/2015</div>
<div class="c" style="left:269px;top:414px;width:125px">1000010</div>
<div class="c" style="left:395px;top:414px;width:114px">V2001</div>
<div class="c" style="left:510px;top:414px;width:105px">2</div>
<div class="c" style="left:616px;top:414px;width:114px">3.63</div>
<div class="c" style="left:731px;top:414px;width:124px">7.26</div>
<div class="c" style="left:24px;top:434px;width:117px">150400011</div>
<div class="c" style="left:142px;top:434px;width:126px;letter-spacing:0.5px;text-indent:0.5px">4/5/2015</div>
<div class="c" style="left:269px;top:434px;width:125px">100011</div>
<div class="c" style="left:395px;top:434px;width:114px">M1002</div>
<div class="c" style="left:510px;top:434px;width:105px">1</div>
<div class="c" style="left:616px;top:434px;width:114px">0.23</div>
<div class="c" style="left:731px;top:434px;width:124px">0.23</div>
<div class="c" style="left:24px;top:454px;width:117px">150400012</div>
<div class="c" style="left:142px;top:454px;width:126px;letter-spacing:0.5px;text-indent:0.5px">4/5/2015</div>
<div class="c" style="left:269px;top:454px;width:125px">100012</div>
<div class="c" style="left:395px;top:454px;width:114px">M1003</div>
<div class="c" style="left:510px;top:454px;width:105px">2</div>
<div class="c" style="left:616px;top:454px;width:114px">1.36</div>
<div class="c" style="left:731px;top:454px;width:124px">2.72</div>
<div class="c" style="left:24px;top:474px;width:117px">150400013</div>
<div class="c" style="left:142px;top:474px;width:126px;letter-spacing:0.5px;text-indent:0.5px">4/6/2015</div>
<div class="c" style="left:269px;top:474px;width:125px">100013</div>
<div class="c" style="left:395px;top:474px;width:114px">P1001</div>
<div class="c" style="left:510px;top:474px;width:105px">1</div>
<div class="c" style="left:616px;top:474px;width:114px">0.81</div>
<div class="c" style="left:731px;top:474px;width:124px">0.81</div>
<div class="c" style="left:24px;top:494px;width:117px">150400014</div>
<div class="c" style="left:142px;top:494px;width:126px;letter-spacing:0.5px;text-indent:0.5px">4/6/2015</div>
<div class="c" style="left:269px;top:494px;width:125px">100014</div>
<div class="c" style="left:395px;top:494px;width:114px">T2001</div>
<div class="c" style="left:510px;top:494px;width:105px">12</div>
<div class="c" style="left:616px;top:494px;width:114px">0.05</div>
<div class="c" style="left:731px;top:494px;width:124px">0.54</div>
<div class="c" style="left:24px;top:514px;width:117px">150400015</div>
<div class="c" style="left:142px;top:514px;width:126px;letter-spacing:0.5px;text-indent:0.5px">4/6/2015</div>
<div class="c" style="left:269px;top:514px;width:125px">100015</div>
<div class="c" style="left:395px;top:514px;width:114px">T3001</div>
<div class="c" style="left:510px;top:514px;width:105px">1</div>
<div class="c" style="left:616px;top:514px;width:114px">0.51</div>
<div class="c" style="left:731px;top:514px;width:124px">0.51</div>
<div class="c" style="left:24px;top:534px;width:117px">150400016</div>
<div class="c" style="left:142px;top:534px;width:126px;letter-spacing:0.5px;text-indent:0.5px">4/6/2015</div>
<div class="c" style="left:269px;top:534px;width:125px">100016</div>
<div class="c" style="left:395px;top:534px;width:114px">V1002</div>
<div class="c" style="left:510px;top:534px;width:105px">2</div>
<div class="c" style="left:616px;top:534px;width:114px">4.54</div>
<div class="c" style="left:731px;top:534px;width:124px">9.07</div>
<div class="c" style="left:24px;top:554px;width:117px">150400017</div>
<div class="c" style="left:142px;top:554px;width:126px;letter-spacing:0.5px;text-indent:0.5px">4/6/2015</div>
<div class="c" style="left:269px;top:554px;width:125px">100017</div>
<div class="c" style="left:395px;top:554px;width:114px">V1001</div>
<div class="c" style="left:510px;top:554px;width:105px">1</div>
<div class="c" style="left:616px;top:554px;width:114px">4.54</div>
<div class="c" style="left:731px;top:554px;width:124px">4.54</div>
<div class="c" style="left:24px;top:574px;width:117px">150400018</div>
<div class="c" style="left:142px;top:574px;width:126px;letter-spacing:0.5px;text-indent:0.5px">4/6/2015</div>
<div class="c" style="left:269px;top:574px;width:125px">100018</div>
<div class="c" style="left:395px;top:574px;width:114px">P3001</div>
<div class="c" style="left:510px;top:574px;width:105px">1</div>
<div class="c" style="left:616px;top:574px;width:114px">0.81</div>
<div class="c" style="left:731px;top:574px;width:124px">0.81</div>
<div class="c" style="left:24px;top:594px;width:117px">150400019</div>
<div class="c" style="left:142px;top:594px;width:126px;letter-spacing:0.5px;text-indent:0.5px">4/7/2015</div>
<div class="c" style="left:269px;top:594px;width:125px">100019</div>
<div class="c" style="left:395px;top:594px;width:114px">T1006</div>
<div class="c" style="left:510px;top:594px;width:105px">1</div>
<div class="c" style="left:616px;top:594px;width:114px">0.14</div>
<div class="c" style="left:731px;top:594px;width:124px">0.14</div>
<div class="c" style="left:24px;top:614px;width:117px">150400020</div>
<div class="c" style="left:142px;top:614px;width:126px;letter-spacing:0.5px;text-indent:0.5px">4/7/2015</div>
<div class="c" style="left:269px;top:614px;width:125px">100020</div>
<div class="c" style="left:395px;top:614px;width:114px">T1008</div>
<div class="c" style="left:510px;top:614px;width:105px">1</div>
<div class="c" style="left:616px;top:614px;width:114px">0.14</div>
<div class="c" style="left:731px;top:614px;width:124px">0.14</div>
<div class="c" style="left:24px;top:634px;width:117px">150400021</div>
<div class="c" style="left:142px;top:634px;width:126px;letter-spacing:0.5px;text-indent:0.5px">4/8/2015</div>
<div class="c" style="left:269px;top:634px;width:125px">100021</div>
<div class="c" style="left:395px;top:634px;width:114px">T1006</div>
<div class="c" style="left:510px;top:634px;width:105px">1</div>
<div class="c" style="left:616px;top:634px;width:114px">0.14</div>
<div class="c" style="left:731px;top:634px;width:124px">0.14</div>
<div class="c" style="left:24px;top:654px;width:117px">150400022</div>
<div class="c" style="left:142px;top:654px;width:126px;letter-spacing:0.5px;text-indent:0.5px">4/8/2015</div>
<div class="c" style="left:269px;top:654px;width:125px">100022</div>
<div class="c" style="left:395px;top:654px;width:114px">V1002</div>
<div class="c" style="left:510px;top:654px;width:105px">2</div>
<div class="c" style="left:616px;top:654px;width:114px">4.54</div>
<div class="c" style="left:731px;top:654px;width:124px">9.07</div>
<div class="c" style="left:24px;top:674px;width:117px">150400023</div>
<div class="c" style="left:142px;top:674px;width:126px;letter-spacing:0.5px;text-indent:0.5px">4/8/2015</div>
<div class="c" style="left:269px;top:674px;width:125px">100023</div>
<div class="c" style="left:395px;top:674px;width:114px">V2002</div>
<div class="c" style="left:510px;top:674px;width:105px">2</div>
<div class="c" style="left:616px;top:674px;width:114px">3.54</div>
<div class="c" style="left:731px;top:674px;width:124px">7.08</div>
<div class="c" style="left:24px;top:694px;width:117px">150400024</div>
<div class="c" style="left:142px;top:694px;width:126px;letter-spacing:0.5px;text-indent:0.5px">4/9/2015</div>
<div class="c" style="left:269px;top:694px;width:125px">100024</div>
<div class="c" style="left:395px;top:694px;width:114px">P3001</div>
<div class="c" style="left:510px;top:694px;width:105px">2</div>
<div class="c" style="left:616px;top:694px;width:114px">0.81</div>
<div class="c" style="left:731px;top:694px;width:124px">1.63</div>
<div class="c" style="left:24px;top:714px;width:117px">150400025</div>
<div class="c" style="left:142px;top:714px;width:126px;letter-spacing:0.5px;text-indent:0.5px">4/9/2015</div>
<div class="c" style="left:269px;top:714px;width:125px">100025</div>
<div class="c" style="left:395px;top:714px;width:114px">V1003</div>
<div class="c" style="left:510px;top:714px;width:105px">1</div>
<div class="c" style="left:616px;top:714px;width:114px">4.54</div>
<div class="c" style="left:731px;top:714px;width:124px">4.54</div>
<div class="c" style="left:24px;top:734px;width:117px">150400026</div>
<div class="c" style="left:142px;top:734px;width:126px;letter-spacing:0.5px;text-indent:0.5px">4/9/2015</div>
<div class="c" style="left:269px;top:734px;width:125px">100026</div>
<div class="c" style="left:395px;top:734px;width:114px">V1003</div>
<div class="c" style="left:510px;top:734px;width:105px">1</div>
<div class="c" style="left:616px;top:734px;width:114px">4.54</div>
<div class="c" style="left:731px;top:734px;width:124px">4.54</div>
<div class="c" style="left:24px;top:754px;width:117px">150400027</div>
<div class="c" style="left:142px;top:754px;width:126px;letter-spacing:0.5px;text-indent:0.5px">4/9/2015</div>
<div class="c" style="left:269px;top:754px;width:125px">100027</div>
<div class="c" style="left:395px;top:754px;width:114px">V1004</div>
<div class="c" style="left:510px;top:754px;width:105px">2</div>
<div class="c" style="left:616px;top:754px;width:114px">5.46</div>
<div class="c" style="left:731px;top:754px;width:124px">10.92</div>
<div class="c" style="left:24px;top:774px;width:117px">150400028</div>
<div class="c" style="left:142px;top:774px;width:126px;letter-spacing:0.5px;text-indent:0.5px">4/10/2015</div>
<div class="c" style="left:269px;top:774px;width:125px">100028</div>
<div class="c" style="left:395px;top:774px;width:114px">T1003</div>
<div class="c" style="left:510px;top:774px;width:105px">1</div>
<div class="c" style="left:616px;top:774px;width:114px">0.14</div>
<div class="c" style="left:731px;top:774px;width:124px">0.14</div>
<div class="c" style="left:24px;top:794px;width:117px">150400029</div>
<div class="c" style="left:142px;top:794px;width:126px;letter-spacing:0.5px;text-indent:0.5px">4/10/2015</div>
<div class="c" style="left:269px;top:794px;width:125px">100029</div>
<div class="c" style="left:395px;top:794px;width:114px">T1002</div>
<div class="c" style="left:510px;top:794px;width:105px">1</div>
<div class="c" style="left:616px;top:794px;width:114px">0.14</div>
<div class="c" style="left:731px;top:794px;width:124px">0.14</div>
<div class="c" style="left:24px;top:814px;width:117px">150400030</div>
<div class="c" style="left:142px;top:814px;width:126px;letter-spacing:0.5px;text-indent:0.5px">4/11/2015</div>
<div class="c" style="left:269px;top:814px;width:125px">100030</div>
<div class="c" style="left:395px;top:814px;width:114px">T2003</div>
<div class="c" style="left:510px;top:814px;width:105px">1</div>
<div class="c" style="left:616px;top:814px;width:114px">0.45</div>
<div class="c" style="left:731px;top:814px;width:124px">0.45</div>
<div class="c" style="left:24px;top:834px;width:117px">150400031</div>
<div class="c" style="left:142px;top:834px;width:126px;letter-spacing:0.5px;text-indent:0.5px">4/11/2015</div>
<div class="c" style="left:269px;top:834px;width:125px">100031</div>
<div class="c" style="left:395px;top:834px;width:114px">M2002</div>
<div class="c" style="left:510px;top:834px;width:105px">1</div>
<div class="c" style="left:616px;top:834px;width:114px">0.18</div>
<div class="c" style="left:731px;top:834px;width:124px">0.18</div>
<div class="c" style="left:24px;top:854px;width:117px">150400032</div>
<div class="c" style="left:142px;top:854px;width:126px;letter-spacing:0.5px;text-indent:0.5px">4/12/2015</div>
<div class="c" style="left:269px;top:854px;width:125px">100032</div>
<div class="c" style="left:395px;top:854px;width:114px">M2001</div>
<div class="c" style="left:510px;top:854px;width:105px">1</div>
<div class="c" style="left:616px;top:854px;width:114px">0.23</div>
<div class="c" style="left:731px;top:854px;width:124px">0.23</div>
<div class="c" style="left:24px;top:874px;width:117px">150400033</div>
<div class="c" style="left:142px;top:874px;width:126px;letter-spacing:0.5px;text-indent:0.5px">4/12/2015</div>
<div class="c" style="left:269px;top:874px;width:125px">100033</div>
<div class="c" style="left:395px;top:874px;width:114px">M2001</div>
<div class="c" style="left:510px;top:874px;width:105px">1</div>
<div class="c" style="left:616px;top:874px;width:114px">0.23</div>
<div class="c" style="left:731px;top:874px;width:124px">0.23</div>
<div class="c" style="left:24px;top:894px;width:117px">150400034</div>
<div class="c" style="left:142px;top:894px;width:126px;letter-spacing:0.5px;text-indent:0.5px">4/12/2015</div>
<div class="c" style="left:269px;top:894px;width:125px">100034</div>
<div class="c" style="left:395px;top:894px;width:114px">P2002</div>
<div class="c" style="left:510px;top:894px;width:105px">1</div>
<div class="c" style="left:616px;top:894px;width:114px">0.81</div>
<div class="c" style="left:731px;top:894px;width:124px">0.81</div>
<div class="c" style="left:24px;top:914px;width:117px">150400035</div>
<div class="c" style="left:142px;top:914px;width:126px;letter-spacing:0.5px;text-indent:0.5px">4/13/2015</div>
<div class="c" style="left:269px;top:914px;width:125px">100035</div>
<div class="c" style="left:395px;top:914px;width:114px">V1001</div>
<div class="c" style="left:510px;top:914px;width:105px">2</div>
<div class="c" style="left:616px;top:914px;width:114px">4.54</div>
<div class="c" style="left:731px;top:914px;width:124px">9.07</div>
<div class="c" style="left:24px;top:934px;width:117px">150400036</div>
<div class="c" style="left:142px;top:934px;width:126px;letter-spacing:0.5px;text-indent:0.5px">4/13/2015</div>
<div class="c" style="left:269px;top:934px;width:125px">100036</div>
<div class="c" style="left:395px;top:934px;width:114px">T2001</div>
<div class="c" style="left:510px;top:934px;width:105px">5</div>
<div class="c" style="left:616px;top:934px;width:114px">0.05</div>
<div class="c" style="left:731px;top:934px;width:124px">0.23</div>
<div class="c" style="left:24px;top:954px;width:117px">150400037</div>
<div class="c" style="left:142px;top:954px;width:126px;letter-spacing:0.5px;text-indent:0.5px">4/13/2015</div>
<div class="c" style="left:269px;top:954px;width:125px">100037</div>
<div class="c" style="left:395px;top:954px;width:114px">M1001</div>
<div class="c" style="left:510px;top:954px;width:105px">2</div>
<div class="c" style="left:616px;top:954px;width:114px">0.57</div>
<div class="c" style="left:731px;top:954px;width:124px">1.13</div>
<div class="c" style="left:24px;top:974px;width:117px">150400038</div>
<div class="c" style="left:142px;top:974px;width:126px;letter-spacing:0.5px;text-indent:0.5px">4/14/2015</div>
<div class="c" style="left:269px;top:974px;width:125px">100038</div>
<div class="c" style="left:395px;top:974px;width:114px">M1003</div>
<div class="c" style="left:510px;top:974px;width:105px">2</div>
<div class="c" style="left:616px;top:974px;width:114px">1.36</div>
<div class="c" style="left:731px;top:974px;width:124px">2.72</div>
<div class="oi" style="left:920px;top:214px;width:150px">Order Information</div>
<div class="mp" style="left:920px;top:234px">Maximum purchase:</div>
<div class="j2" style="left:1070px;top:233px;width:65px"></div>
<div class="selbox"></div><div class="selhandle"></div>
</div>
<!-- vertical scrollbar -->
<div class="a" style="left:1199px;top:194px;width:20px;height:792px;background:#e6e6e6"></div>
<div class="a" style="left:1199px;top:213px;width:1px;height:773px;background:#fff"></div>
<div class="a" style="left:1200px;top:213px;width:1px;height:774px;background:#8f8f8f"></div>
<div class="a" style="left:1204px;top:211px;width:15px;height:760px;background:#dcdcdc"></div>
<div class="a" style="left:1204px;top:196px;width:15px;height:15px;background:#fff;border:1px solid #9a9a9a"></div>
<svg class="a" style="left:1207px;top:201px" width="8" height="4"><path d="M0 4h8L4 0z" fill="#606060"/></svg>
<div class="a" style="left:1204px;top:211px;width:15px;height:54px;background:#fff;border:1px solid #9a9a9a"></div>
<div class="a" style="left:1204px;top:971px;width:15px;height:15px;background:#fff;border:1px solid #9a9a9a"></div>
<svg class="a" style="left:1207px;top:977px" width="8" height="4"><path d="M0 0h8L4 4z" fill="#606060"/></svg>
<div class="a" style="left:0px;top:986px;width:1201px;height:1px;background:#8f8f8f"></div>
<div id="tabs">
  <svg class="a" style="left:25px;top:9px" width="5" height="8"><path d="M5 0v8L0 4z" fill="#c0c0c0"/></svg>
  <svg class="a" style="left:54px;top:9px" width="5" height="8"><path d="M0 0v8L5 4z" fill="#c0c0c0"/></svg>
  <div class="a" style="left:98px;top:5px;width:1px;height:18px;background:#bbb"></div>
  <div class="rt" style="left:111px;top:5px;text-align:left;color:#505050;font-size:12.7px">Customers</div>
  <div class="a" style="left:187px;top:5px;width:1px;height:18px;background:#bbb"></div>
  <div class="rt" style="left:200px;top:5px;text-align:left;color:#505050;font-size:12.7px">Products</div>
  <div class="a" style="left:265px;top:-1px;width:66px;height:25px;background:#fff;border:1px solid #c6c6c6;border-top:none;border-bottom:2px solid #217346"></div>
  <div class="rt" style="left:277px;top:5px;text-align:left;color:#217346;font-weight:bold;font-size:12.7px">Orders</div>
  <div class="rt" style="left:345px;top:5px;text-align:left;color:#505050;font-size:12.7px;letter-spacing:0.23px">Customers by Order</div>
  <div class="a" style="left:476px;top:5px;width:1px;height:18px;background:#bbb"></div>
  <svg class="a" style="left:509px;top:5px" width="17" height="17"><circle cx="8.5" cy="8.5" r="7" fill="none" stroke="#777" stroke-width="1.2"/><path d="M8.5 4.5v8M4.5 8.5h8" stroke="#777" stroke-width="1.3"/></svg>
  <div class="a" style="left:732px;top:9px;width:2px;height:2px;background:#9a9a9a"></div>
  <div class="a" style="left:732px;top:13px;width:2px;height:2px;background:#9a9a9a"></div>
  <div class="a" style="left:732px;top:17px;width:2px;height:2px;background:#9a9a9a"></div>
  <div class="a" style="left:1144px;top:7px;width:40px;height:14px;background:#dcdcdc"></div>
  <div class="a" style="left:749px;top:6px;width:16px;height:15px;background:#fff;border:1px solid #8f8f8f"></div>
  <svg class="a" style="left:754px;top:10px" width="5" height="8"><path d="M5 0v8L0 4z" fill="#606060"/></svg>
  <div class="a" style="left:764px;top:6px;width:380px;height:15px;background:#fff;border:1px solid #8f8f8f"></div>
  <div class="a" style="left:1183px;top:6px;width:15px;height:15px;background:#fff;border:1px solid #8f8f8f"></div>
  <svg class="a" style="left:1189px;top:10px" width="5" height="8"><path d="M0 0v8L5 4z" fill="#606060"/></svg>
</div>
<div id="status">
  <div class="rt" style="left:5px;top:2px;text-align:left;font-size:11.5px;color:#444">Ready</div>
  <div class="a" style="left:919px;top:-1px;width:37px;height:23px;background:#d4d4d4"></div>
  <svg class="a" style="left:930px;top:4px" width="14" height="13"><rect x="0.5" y="0.5" width="13" height="12" fill="none" stroke="#666"/><path d="M0.5 4.5h13M0.5 8.5h13M4.5 0.5v12M9.5 0.5v12" stroke="#666"/></svg>
  <svg class="a" style="left:968px;top:4px" width="14" height="13"><rect x="0.5" y="0.5" width="13" height="12" fill="none" stroke="#666"/><rect x="3.5" y="3.5" width="7" height="6" fill="none" stroke="#666"/><path d="M5 5.5h4M5 7.5h4" stroke="#666"/></svg>
  <svg class="a" style="left:1006px;top:4px" width="14" height="13"><rect x="0.5" y="0.5" width="13" height="12" fill="none" stroke="#666"/><path d="M4.5 0.5v6h9M8.5 0.5v6" fill="none" stroke="#666"/></svg>
  <div class="a" style="left:1038px;top:10px;width:6px;height:2px;background:#555"></div>
  <div class="a" style="left:1050px;top:10px;width:96px;height:1px;background:#aaa"></div>
  <div class="a" style="left:1095px;top:4px;width:4px;height:12px;background:#555"></div>
  <svg class="a" style="left:1151px;top:5px" width="10" height="10"><path d="M5 0v10M0 5h10" stroke="#555" stroke-width="1.4"/></svg>
  <div class="rt" style="left:1175px;top:3px;text-align:left;font-size:11.5px;color:#444">100%</div>
</div>
<div class="a" style="left:0;top:1036px;width:1219px;height:1px;background:#217346"></div>

</body></html>
